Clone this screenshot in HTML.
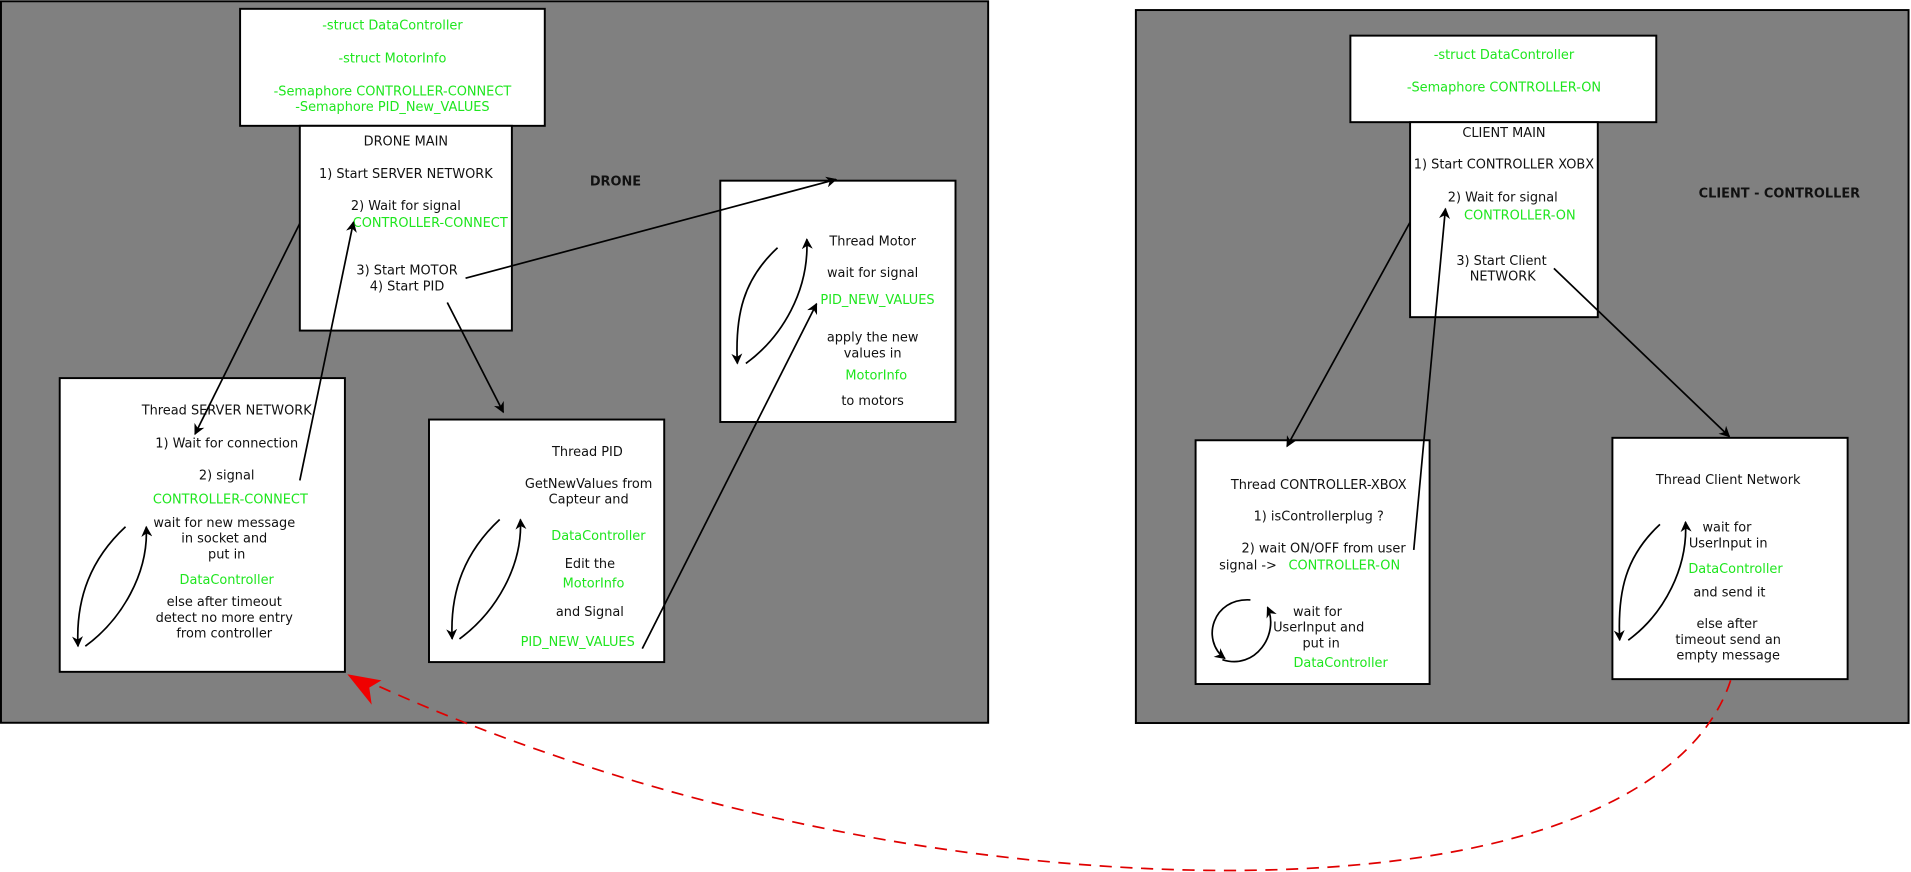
<!DOCTYPE html>
<html><head><meta charset="utf-8"><style>
html,body{margin:0;padding:0;background:#fff;}
svg{display:block}
text{font-family:"DejaVu Sans","Liberation Sans",sans-serif;font-size:10.6px;fill:#111;text-anchor:middle}
.g{fill:#1ee61e}
.b{font-weight:bold}
.box{fill:#fff;stroke:#000;stroke-width:1.6}
.ln{stroke:#000;stroke-width:1.4;fill:none}
</style></head><body>
<svg width="1911" height="872" viewBox="0 0 1568 715" xmlns="http://www.w3.org/2000/svg">
<defs>
<marker id="a" viewBox="0 0 10 10" refX="9" refY="5" markerWidth="9" markerHeight="9" orient="auto-start-reverse" markerUnits="userSpaceOnUse"><path d="M0,0 L10,5 L0,10 L3,5 z" fill="#000"/></marker>
</defs>
<rect x="0.8" y="0.8" width="810" height="592" fill="#808080" stroke="#000" stroke-width="1.6"/>
<rect x="932" y="8" width="634" height="585" fill="#808080" stroke="#000" stroke-width="1.6"/>

<!-- left boxes -->
<rect class="box" x="197" y="7" width="250" height="96"/>
<text class="g" x="322" y="24">-struct DataController</text>
<text class="g" x="322" y="51">-struct MotorInfo</text>
<text class="g" x="322" y="78">-Semaphore CONTROLLER-CONNECT</text>
<text class="g" x="322" y="91">-Semaphore PID_New_VALUES</text>

<rect class="box" x="246" y="103" width="174" height="168"/>
<text x="333" y="119">DRONE MAIN</text>
<text x="333" y="146">1) Start SERVER NETWORK</text>
<text x="333" y="172">2) Wait for signal</text>
<text class="g" x="353" y="186">CONTROLLER-CONNECT</text>
<text x="334" y="225">3) Start MOTOR</text>
<text x="334" y="238">4) Start PID</text>

<text class="b" x="505" y="152">DRONE</text>

<rect class="box" x="591" y="148" width="193" height="198"/>
<text x="716" y="201">Thread Motor</text>
<text x="716" y="227">wait for signal</text>
<text class="g" x="720" y="249">PID_NEW_VALUES</text>
<text x="716" y="280">apply the new</text>
<text x="716" y="293">values in</text>
<text class="g" x="719" y="311">MotorInfo</text>
<text x="716" y="332">to motors</text>

<rect class="box" x="49" y="310" width="234" height="241"/>
<text x="186" y="340">Thread SERVER NETWORK</text>
<text x="186" y="367">1) Wait for connection</text>
<text x="186" y="393">2) signal</text>
<text class="g" x="189" y="413">CONTROLLER-CONNECT</text>
<text x="184" y="432">wait for new message</text>
<text x="184" y="445">in socket and</text>
<text x="186" y="458">put in</text>
<text class="g" x="186" y="479">DataController</text>
<text x="184" y="497">else after timeout</text>
<text x="184" y="510">detect no more entry</text>
<text x="184" y="523">from controller</text>

<rect class="box" x="352" y="344" width="193" height="199"/>
<text x="482" y="374">Thread PID</text>
<text x="483" y="400">GetNewValues from</text>
<text x="483" y="413">Capteur and</text>
<text class="g" x="491" y="443">DataController</text>
<text x="484" y="466">Edit the</text>
<text class="g" x="487" y="482">MotorInfo</text>
<text x="484" y="505">and Signal</text>
<text class="g" x="474" y="530">PID_NEW_VALUES</text>

<!-- right boxes -->
<rect class="box" x="1108" y="29" width="251" height="71"/>
<text class="g" x="1234" y="48">-struct DataController</text>
<text class="g" x="1234" y="75">-Semaphore CONTROLLER-ON</text>

<rect class="box" x="1157" y="100" width="154" height="160"/>
<text x="1234" y="112">CLIENT MAIN</text>
<text x="1234" y="138">1) Start CONTROLLER XOBX</text>
<text x="1233" y="165">2) Wait for signal</text>
<text class="g" x="1247" y="180">CONTROLLER-ON</text>
<text x="1232" y="217">3) Start Client</text>
<text x="1233" y="230">NETWORK</text>

<text class="b" x="1460" y="162">CLIENT - CONTROLLER</text>

<rect class="box" x="981" y="361" width="192" height="200"/>
<text x="1082" y="401">Thread CONTROLLER-XBOX</text>
<text x="1082" y="427">1) isControllerplug ?</text>
<text x="1086" y="453">2) wait ON/OFF from user</text>
<text x="1024" y="467">signal -&gt;</text>
<text class="g" x="1103" y="467">CONTROLLER-ON</text>
<text x="1081" y="505">wait for</text>
<text x="1082" y="518">UserInput and</text>
<text x="1084" y="531">put in</text>
<text class="g" x="1100" y="547">DataController</text>

<rect class="box" x="1323" y="359" width="193" height="198"/>
<text x="1418" y="397">Thread Client Network</text>
<text x="1417" y="436">wait for</text>
<text x="1418" y="449">UserInput in</text>
<text class="g" x="1424" y="470">DataController</text>
<text x="1419" y="489">and send it</text>
<text x="1417" y="515">else after</text>
<text x="1418" y="528">timeout send an</text>
<text x="1418" y="541">empty message</text>

<!-- arrows left -->
<line class="ln" x1="246" y1="183" x2="160" y2="356" marker-end="url(#a)"/>
<line class="ln" x1="246" y1="394" x2="290" y2="182" marker-end="url(#a)"/>
<line class="ln" x1="382" y1="228" x2="686" y2="147" marker-end="url(#a)"/>
<line class="ln" x1="367" y1="248" x2="413" y2="338" marker-end="url(#a)"/>
<line class="ln" x1="527" y1="532" x2="670" y2="249" marker-end="url(#a)"/>
<!-- arrows right -->
<line class="ln" x1="1157" y1="182" x2="1056" y2="366" marker-end="url(#a)"/>
<line class="ln" x1="1160" y1="451" x2="1186" y2="171" marker-end="url(#a)"/>
<line class="ln" x1="1275" y1="220" x2="1419" y2="358" marker-end="url(#a)"/>

<!-- loop arrows -->
<g class="ln">
<path d="M103,432 C75,458 62,490 64,530" marker-end="url(#a)"/>
<path d="M70,530 C100,508 122,470 120,432" marker-end="url(#a)"/>
<path d="M410,426 C382,452 369,484 371,524" marker-end="url(#a)"/>
<path d="M377,524 C407,502 429,464 427,426" marker-end="url(#a)"/>
<path d="M638,203 C610,229 603,258 605,298" marker-end="url(#a)"/>
<path d="M612,298 C642,276 664,238 662,196" marker-end="url(#a)"/>
<path d="M1362,430 C1334,456 1327,485 1329,525" marker-end="url(#a)"/>
<path d="M1336,525 C1366,503 1385,465 1383,428" marker-end="url(#a)"/>
<path d="M1026,492 C995,490 985,525 1005,540" marker-end="url(#a)"/>
<path d="M1003,541 C1030,550 1050,520 1040,498" marker-end="url(#a)"/>
</g>

<!-- red dashed -->
<path d="M1420,558 C1390,650 1250,715 1000,714 C750,712 500,650 300,558" fill="none" stroke="#e00000" stroke-width="1.4" stroke-dasharray="10,7"/>
<path d="M285,553 L313,558 L303,564 L305,578 z" fill="#f00000"/>
</svg>
</body></html>
